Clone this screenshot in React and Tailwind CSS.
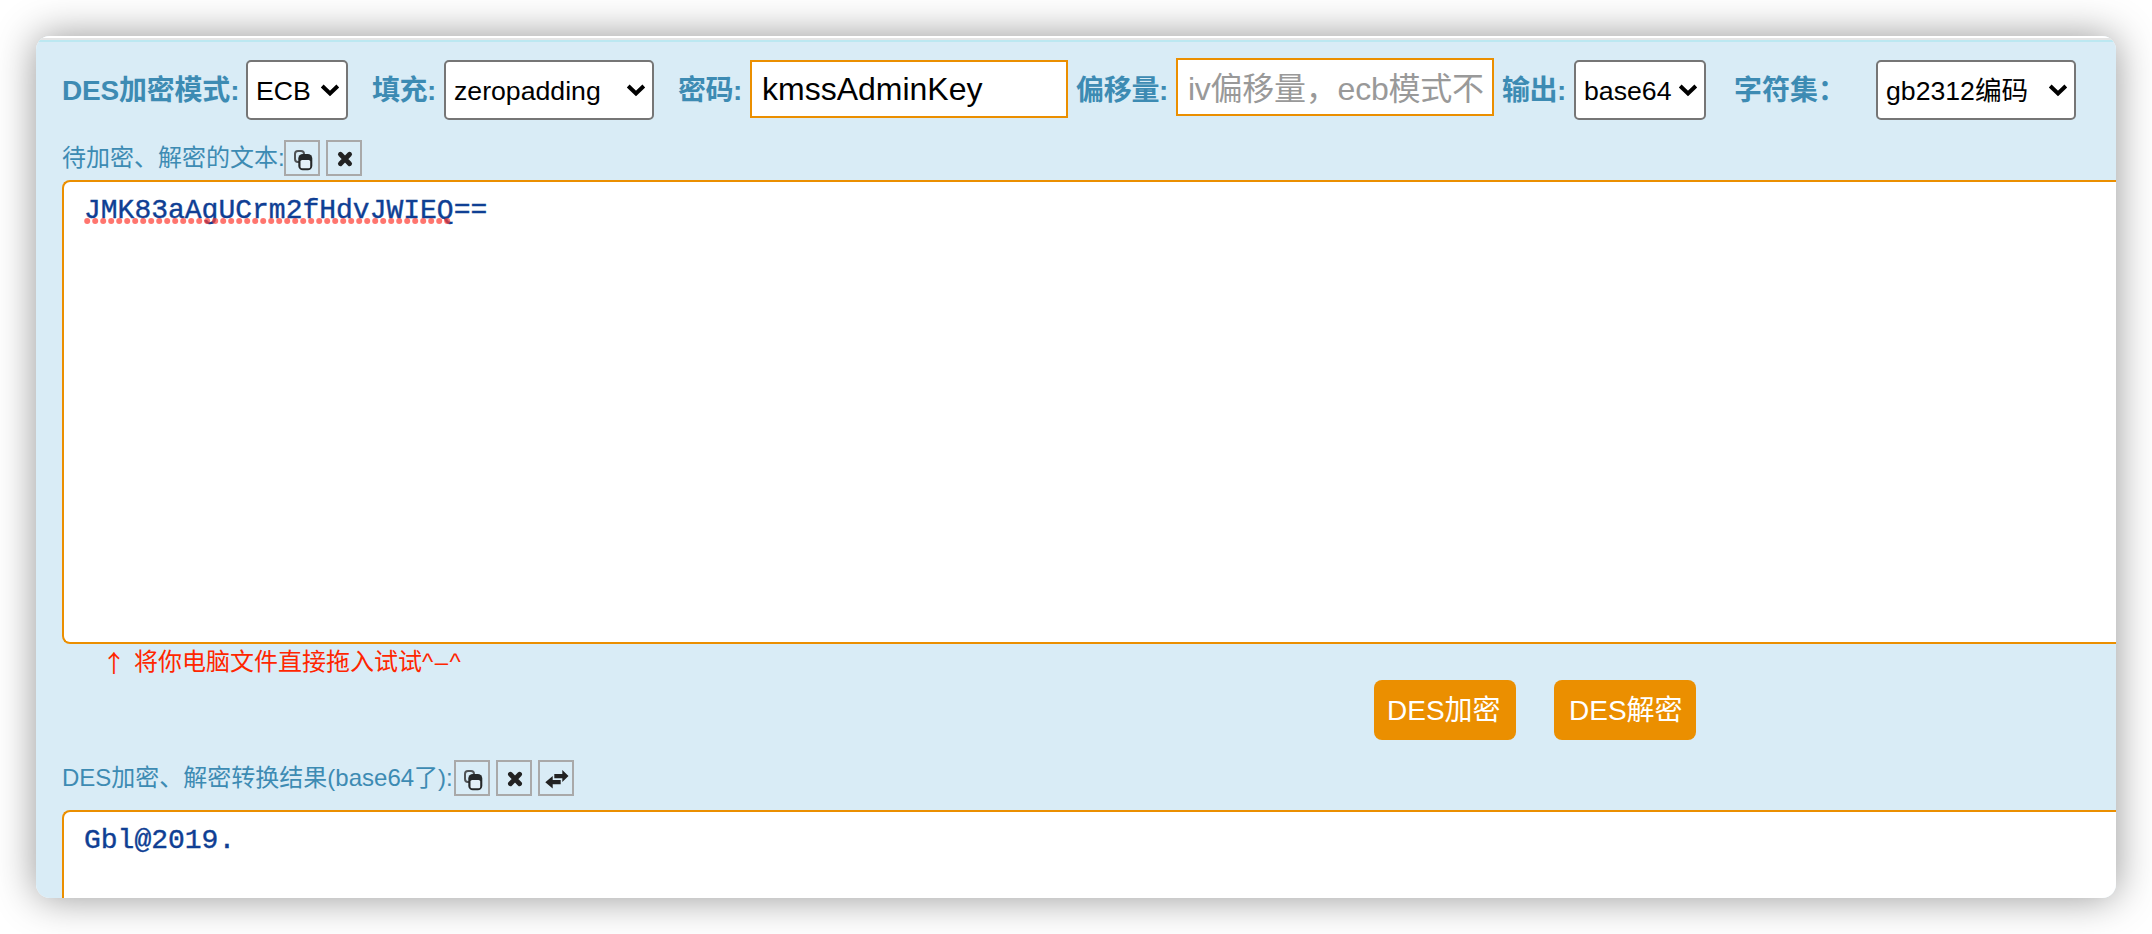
function Label({ className, children }) {
  return (
    <span className={`mt-[29px] shrink-0 whitespace-nowrap text-[28px] leading-[40px] font-bold text-[#3d8bb3] ${className}`}>
      {children}
    </span>
  );
}

function Select({ className, children }) {
  return (
    <div className={`mt-[18px] flex h-[60px] shrink-0 items-center justify-between rounded-[5px] border-2 border-[#767676] bg-white pr-[6px] pl-[8px] text-[26.67px] text-black ${className}`}>
      <span className="pt-[2px] leading-[40px] whitespace-nowrap">{children}</span>
      <svg className="h-[14px] w-[20px] shrink-0" viewBox="0 0 20 14" fill="none">
        <path d="M2.200 3l7.800 7.400 7.800-7.400" stroke="#000" strokeWidth="4" />
      </svg>
    </div>
  );
}

function IconBox({ children }) {
  return (
    <span className="flex h-[36px] w-[36px] shrink-0 border-2 border-[#a9a9a9]">
      <svg className="h-[32px] w-[32px]" viewBox="0 0 32 32" fill="none">
        {children}
      </svg>
    </span>
  );
}

function CopyIcon() {
  return (
    <IconBox>
      <rect x="9" y="9" width="9" height="11" rx="3" stroke="#505355" strokeWidth="2" />
      <rect x="12.300" y="12" width="14" height="16.300" rx="4.500" fill="#262829" />
      <rect x="14.500" y="18" width="9.700" height="8.300" rx="1.600" fill="#e4f1f9" />
    </IconBox>
  );
}

function CloseIcon() {
  return (
    <IconBox>
      <path d="M12.400 12.300l9.200 9.400M21.600 12.300l-9.200 9.400" stroke="#222" strokeWidth="4.800" strokeLinecap="round" />
    </IconBox>
  );
}

function SwapIcon() {
  return (
    <IconBox>
      <path d="M14.300 12h8V8l6.200 6-6.200 6v-3.800h-8z" fill="#222" />
      <path d="M20.700 18h-8v-4l-7.400 6.200 7.400 6.200v-4.200h8z" fill="#222" />
    </IconBox>
  );
}

const MONO = "font-['Liberation_Mono',monospace] text-[28px] leading-[32px] text-[#0f3f94] [-webkit-text-stroke:0.4px_#0f3f94]";

export default function App() {
  return (
    <div className="h-[934px] w-[2152px] overflow-hidden bg-white p-[36px] font-['Liberation_Sans','Noto_Sans_CJK_SC',sans-serif]">
      <div className="h-[862px] w-[2080px] rounded-[14px] shadow-[0_0_40px_rgba(0,0,0,0.42)]">
        <div className="flex h-full w-full flex-col overflow-hidden rounded-[14px] bg-[#d9ecf6]">
          <div className="h-[2px] shrink-0 bg-white" />
          <div className="h-[2px] shrink-0 bg-[#e5e5e5]" />
          <div className="h-[2px] shrink-0 bg-[#bce8f1]" />

          <div className="flex h-[98px] shrink-0 items-start pl-[26px]">
            <Label className="w-[184px] tracking-[-0.2px]">DES加密模式:</Label>
            <Select className="w-[102px]">ECB</Select>
            <Label className="ml-[24px] w-[72px] tracking-[-0.5px]">填充:</Label>
            <Select className="w-[210px]">zeropadding</Select>
            <Label className="ml-[24px] w-[72px] tracking-[-0.5px]">密码:</Label>
            <div className="mt-[18px] flex h-[58px] w-[318px] shrink-0 items-center border-2 border-[#eb8f00] bg-white px-[10px] text-[32px] text-black">
              kmssAdminKey
            </div>
            <Label className="ml-[8px] w-[100px] tracking-[-0.3px]">偏移量:</Label>
            <div className="mt-[16px] flex h-[58px] w-[318px] shrink-0 items-center border-2 border-[#eb8f00] bg-white px-[10px] pt-[3px] text-[32px] text-[#999]">
              <span className="leading-[50px] tracking-[-0.25px] whitespace-nowrap">iv偏移量，ecb模式不</span>
            </div>
            <Label className="ml-[8px] w-[72px] tracking-[-0.5px]">输出:</Label>
            <Select className="w-[132px]">base64</Select>
            <Label className="ml-[28px] w-[142px]">字符集：</Label>
            <Select className="w-[200px]">gb2312编码</Select>
          </div>

          <div className="flex h-[40px] shrink-0 items-start pl-[26px]">
            <span className="w-[222px] shrink-0 text-[24px] leading-[36px] whitespace-nowrap text-[#3d8bb3]">待加密、解密的文本:</span>
            <div className="flex gap-[6px]">
              <CopyIcon />
              <CloseIcon />
            </div>
          </div>

          <div className={`ml-[26px] h-[464px] shrink-0 rounded-l-[8px] border-2 border-r-0 border-[#eb8f00] bg-white pt-[13px] pl-[20px] ${MONO}`}>
            <div className="relative h-[32px] w-[404px]">
              JMK83aAgUCrm2fHdvJWIEQ==
              <svg className="absolute top-[23px] left-0 h-[6px] w-[368px]" viewBox="0 0 368 6">
                {Array.from({ length: 46 }, (_, i) => (
                  <circle key={i} cx={3.2 + i * 8} cy="3" r="3" fill="#ff3b30" fillOpacity="0.7" />
                ))}
              </svg>
            </div>
          </div>

          <div className="flex h-[36px] shrink-0 items-center pl-[66px] text-[24px] text-[#ff2600]">
            <span className="w-[32px] font-['Noto_Sans_CJK_SC',sans-serif] leading-[34px]">↑</span>
            <span className="whitespace-nowrap">
              将你电脑文件直接拖入试试<span className="tracking-[1.4px]">^–^</span>
            </span>
          </div>

          <div className="flex h-[80px] shrink-0 gap-[38px] pl-[1338px] text-[28px] text-white">
            <div className="flex h-[60px] w-[142px] items-center rounded-[8px] bg-[#eb8f00] pt-[2px] pl-[13px]">DES加密</div>
            <div className="flex h-[60px] w-[142px] items-center rounded-[8px] bg-[#eb8f00] pt-[2px] pl-[15px]">DES解密</div>
          </div>

          <div className="flex h-[50px] shrink-0 items-start pl-[26px]">
            <span className="w-[392px] shrink-0 text-[24px] leading-[36px] whitespace-nowrap text-[#3d8bb3]">DES加密、解密转换结果(base64了):</span>
            <div className="flex gap-[6px]">
              <CopyIcon />
              <CloseIcon />
              <SwapIcon />
            </div>
          </div>

          <div className={`ml-[26px] h-[120px] shrink-0 rounded-tl-[8px] border-2 border-r-0 border-[#eb8f00] bg-white pt-[13px] pl-[20px] ${MONO}`}>
            Gbl@2019.
          </div>
        </div>
      </div>
    </div>
  );
}
